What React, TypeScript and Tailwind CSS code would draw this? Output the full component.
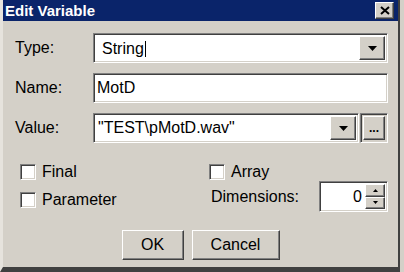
import type { ReactNode } from "react";

const sunken =
  "border border-t-[#808080] border-l-[#808080] border-b-white border-r-white shadow-[inset_1px_1px_0_#404040,inset_-1px_-1px_0_#d4d0c8]";
const raised =
  "border border-t-white border-l-white border-b-[#404040] border-r-[#404040] shadow-[inset_-1px_-1px_0_#808080] bg-[#d4d0c8]";

function Arrow({ size = 9 }: { size?: number }) {
  return (
    <svg width={size} height={Math.ceil(size / 2)} viewBox="0 0 9 5">
      <path d="M0 0h9L4.5 5z" fill="#000" />
    </svg>
  );
}

function DropButton() {
  return (
    <div className={`flex h-full w-[26px] items-center justify-center ${raised}`}>
      <Arrow />
    </div>
  );
}

function Field({ label, children }: { label: string; children: ReactNode }) {
  return (
    <div className="flex h-[30px] items-center">
      <span className="w-[78px]">{label}</span>
      {children}
    </div>
  );
}

function Check({ label }: { label: string }) {
  return (
    <div className="flex h-[16px] items-center gap-[6px]">
      <span className={`block h-[16px] w-[16px] bg-white ${sunken}`} />
      <span>{label}</span>
    </div>
  );
}

export default function App() {
  return (
    <div className="h-[272px] w-[404px] bg-[#d4d0c8] font-['Liberation_Sans',Arial,sans-serif] text-[16px] leading-[18px] text-black">
      <div className="flex h-[272px] w-[400px] flex-col border-b-[5px] border-r-[2px] border-l-[3px] border-b-[#404040] border-r-[#404040] border-l-[#e6e3dd]">
        <div className="flex h-[21px] items-center justify-between bg-[#0a246a] pl-[2px] pr-[4px]">
          <span className="text-[15px] font-bold text-white">Edit Variable</span>
          <div className={`flex h-[17px] w-[19px] items-center justify-center ${raised}`}>
            <svg width="10" height="9" viewBox="0 0 10 9">
              <path d="M1 1l8 7M9 1l-8 7" stroke="#000" strokeWidth="2" />
            </svg>
          </div>
        </div>

        <div className="flex flex-1 flex-col pl-[12px] pr-[10px] pt-[12px]">
          <div className="flex flex-col gap-[10px]">
            <Field label="Type:">
              <div className={`flex h-full flex-1 items-center bg-white p-[2px] ${sunken}`}>
                <span className="flex-1 pl-[6px]">
                  String<span className="ml-[1px] inline-block h-[16px] w-px translate-y-[3px] bg-black" />
                </span>
                <DropButton />
              </div>
            </Field>
            <Field label="Name:">
              <div className={`flex h-full flex-1 items-center bg-white pl-[3px] ${sunken}`}>MotD</div>
            </Field>
            <Field label="Value:">
              <div className="flex h-full flex-1 gap-px">
                <div className={`flex h-full flex-1 items-center bg-white p-[2px] ${sunken}`}>
                  <span className="flex-1 pl-[2px]">"TEST\pMotD.wav"</span>
                  <DropButton />
                </div>
                <div className={`h-full w-[28px] p-[2px] ${sunken} bg-[#d4d0c8]`}>
                  <div className={`flex h-full items-center justify-center text-[12px] font-bold leading-none ${raised}`}>
                    ...
                  </div>
                </div>
              </div>
            </Field>
          </div>

          <div className="mt-[21px] flex">
            <div className="flex w-[194px] flex-col gap-[12px] pl-[5px]">
              <Check label="Final" />
              <Check label="Parameter" />
            </div>
            <div className="flex flex-1 flex-col">
              <Check label="Array" />
              <div className="mt-px flex h-[31px] items-center justify-between pl-[2px]">
                <span>Dimensions:</span>
                <div className={`flex h-full w-[69px] bg-white p-[2px] ${sunken}`}>
                  <span className="flex flex-1 items-center justify-end pr-[3px]">0</span>
                  <div className="flex w-[20px] flex-col">
                    <div className={`flex flex-1 items-center justify-center ${raised}`}>
                      <svg width="5" height="3" viewBox="0 0 5 3">
                        <path d="M0 3h5L2.5 0z" fill="#000" />
                      </svg>
                    </div>
                    <div className={`flex flex-1 items-center justify-center ${raised}`}>
                      <svg width="5" height="3" viewBox="0 0 5 3">
                        <path d="M0 0h5L2.5 3z" fill="#000" />
                      </svg>
                    </div>
                  </div>
                </div>
              </div>
            </div>
          </div>

          <div className="mt-[18px] flex justify-center gap-[8px] pr-[2px]">
            <button className={`h-[30px] w-[62px] ${raised}`}>OK</button>
            <button className={`h-[30px] w-[88px] ${raised}`}>Cancel</button>
          </div>
        </div>
      </div>
    </div>
  );
}
